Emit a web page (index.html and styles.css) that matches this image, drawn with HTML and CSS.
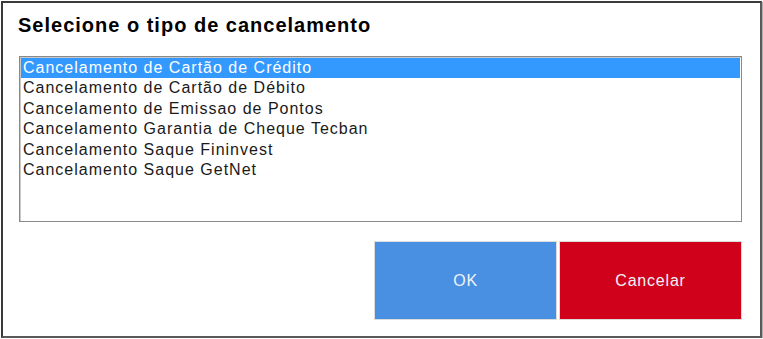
FILE: index.html
```html
<!DOCTYPE html>
<html lang="pt">
<head>
<meta charset="utf-8">
<title>Selecione o tipo de cancelamento</title>
<link rel="stylesheet" href="styles.css">
</head>
<body>
<div class="dialog">
  <h1 class="title">Selecione o tipo de cancelamento</h1>
  <ul class="list">
    <li class="item selected">Cancelamento de Cartão de Crédito</li>
    <li class="item">Cancelamento de Cartão de Débito</li>
    <li class="item">Cancelamento de Emissao de Pontos</li>
    <li class="item">Cancelamento Garantia de Cheque Tecban</li>
    <li class="item">Cancelamento Saque Fininvest</li>
    <li class="item">Cancelamento Saque GetNet</li>
  </ul>
  <div class="actions">
    <button class="btn btn-ok">OK</button>
    <button class="btn btn-cancel">Cancelar</button>
  </div>
</div>
</body>
</html>
```
FILE: styles.css
```css
html, body {
  margin: 0;
  padding: 0;
  background: #ffffff;
}
body {
  font-family: "Liberation Sans", Arial, sans-serif;
  padding: 1px 0 0 1px;
}
.dialog {
  box-sizing: border-box;
  width: 761px;
  height: 337px;
  border-top: 2px solid #3a3a3a;
  border-left: 2px solid #3a3a3a;
  border-right: 2px solid #5a5a5a;
  border-bottom: 2px solid #5a5a5a;
  box-shadow: 1px 1px 0 #b0b0b0;
  padding: 10px 18px 0 15px;
  display: flex;
  flex-direction: column;
}
.title {
  margin: 0;
  font-size: 20px;
  font-weight: bold;
  line-height: 25px;
  letter-spacing: 1px;
  color: #000;
}
.list {
  list-style: none;
  margin: 18px 0 0 1px;
  padding: 1px;
  height: 166px;
  box-sizing: border-box;
  border: 1px solid #8a8a8a;
  box-shadow: inset 1px 1px 0 #c8c8c8;
}
.item {
  font-size: 16px;
  line-height: 20.4px;
  height: 20.4px;
  padding-left: 2px;
  letter-spacing: 1px;
  color: #1a1a1a;
  white-space: nowrap;
}
.item.selected {
  background: #3399ff;
  color: #ffffff;
}
.actions {
  display: flex;
  justify-content: flex-end;
  gap: 2px;
  margin-top: 19px;
}
.btn {
  width: 183px;
  height: 79px;
  border: 1px solid #dcdcdc;
  font-family: "Liberation Sans", Arial, sans-serif;
  font-size: 16px;
  letter-spacing: 0.8px;
  color: #eef2f8;
  padding: 0;
}
.btn-ok {
  background: #4a90e2;
}
.btn-cancel {
  background: #d0021b;
}
```
